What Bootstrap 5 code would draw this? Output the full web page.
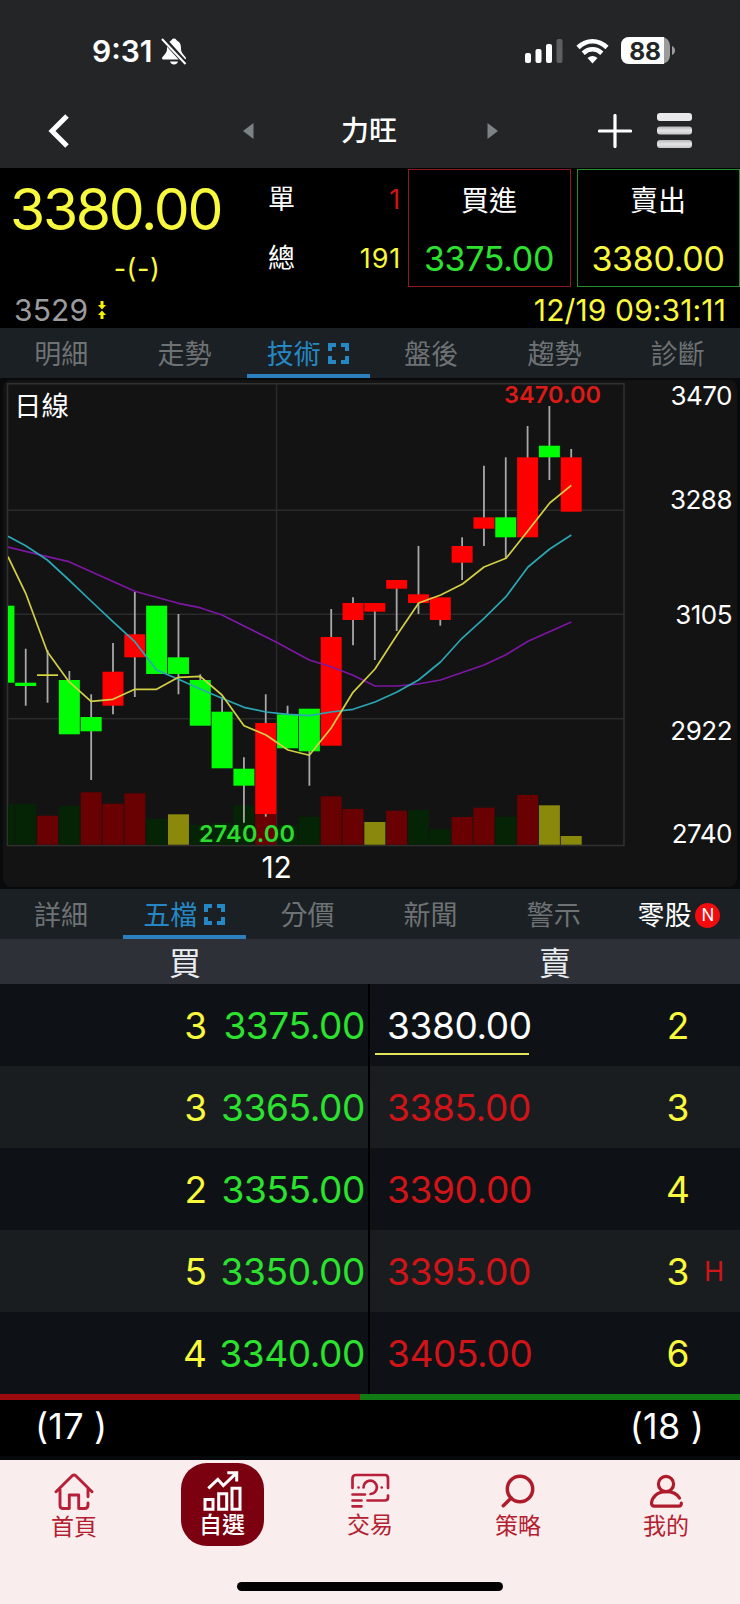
<!DOCTYPE html>
<html lang="zh-Hant">
<head>
<meta charset="utf-8">
<meta name="viewport" content="width=device-width, initial-scale=1">
<title>力旺 3529</title>
<link href="https://cdn.jsdelivr.net/npm/bootstrap@5.3.0/dist/css/bootstrap.min.css" rel="stylesheet">
<style>
  :root { --y: #f8f93c; --g: #2be32f; --r: #d01418; }
  body { background: #05090b; color: #fff; font-family: Inter, "Noto Sans CJK TC", sans-serif; line-height: 1; width: 740px; margin: 0; overflow-x: hidden; }
  svg { display: block; flex: none; }
  .num { letter-spacing: -.01em; white-space: nowrap; }
  .yel { color: var(--y); } .grn { color: var(--g); } .rd { color: var(--r); }
  .topbar { background: #232526; height: 168px; }
  .status { height: 98px; padding: 3px 64px 0 92px; }
  .clock { font-size: 30px; font-weight: 600; letter-spacing: 0; }
  .titlebar { height: 66px; padding: 0 47px 0 47px; }
  .titlebar h1 { font-size: 28px; font-weight: 500; padding: 2px 3px 0 0; }
  .quote { background: #000; height: 160px; padding-top: 1px; }
  .quote-main { height: 118px; }
  .last { width: 252px; }
  .last-price { font-size: 57px; height: 80px; padding-left: 10px; letter-spacing: -.04em; }
  .change { font-size: 27px; height: 38px; padding-left: 22px; letter-spacing: .02em; }
  .vol { width: 148px; padding-left: 16px; font-size: 27px; margin-right: 8px; }
  .vol .num { letter-spacing: .03em; margin-right: -1px; }
  .line1 { height: 61px; } .line2 { height: 56px; }
  .deal { width: 163px; height: 118px; border: 1.5px solid #8c1a20; font-size: 28px; padding-right: 1px; }
  .deal + .deal { border-color: #21902a; margin-left: 6px; width: 163px; }
  .deal .num { font-size: 34px; }
  .quote-foot { height: 41px; padding: 4px 14px 0 14px; font-size: 30px; }
  .quote-foot .num { letter-spacing: .004em; }
  .tabs { background: #1a2023; height: 50px; font-size: 27px; color: #6f7274; }
  .tabs > div { flex: 1 1 0; border-bottom: 4px solid transparent; padding-top: 13px; padding-right: 1px; }
  .tabs > .on { color: #2687c5; border-color: #2b80bd; }
  .tabs > .lit { color: #fff; padding-right: 0; padding-left: 2px; }
  .new { background: #f30b0d; color: #fff; width: 25px; height: 25px; font-size: 17px; margin: 1px 0 0 4px; }
  .chart { height: 511px; background: #080a0b; }
  .sides { background: #2d3037; height: 45px; font-size: 32px; color: #e9edf0; padding-top: 5px; }
  .lvl { height: 82px; background: #0e1216; font-size: 37px; }
  .lvl:nth-child(even) { background: #191d20; }
  .lvl > div { width: 50%; padding-top: 1px; }
  .bid { border-right: 2px solid #000; padding-right: 3px; }
  .bid .num { width: 147px; }
  .ask { padding-left: 5px; }
  .ask .num { width: 154px; height: 58px; padding-left: 12px; border: solid transparent; border-width: 2px 0; }
  .ask .best { color: #fff; border-bottom-color: #e6e55a; }
  .qty { margin-right: 11px; }
  .ask .qty { width: 30px; text-align: center; margin: 0 11px 0 0; }
  .flag { width: 36px; font-size: 27px; font-weight: 400; }
  .pressure { height: 6px; }
  .sums { background: #000; height: 56px; font-size: 36px; padding: 0 36px 4px 35px; }
  .sums .num { letter-spacing: .005em; }
  .dock { background: #faeded; height: 144px; margin-top: 4px; color: #b3202f; position: relative; }
  .dock a { width: 148px; color: #b3202f; font-size: 23px; text-decoration: none; padding-top: 12px; }
  .dock a.on { color: #fff; padding-top: 3px; font-weight: 500; }
  .pill { width: 83px; height: 83px; border-radius: 26px; background: #7b0010; padding-top: 8px; }
  .homebar { width: 266px; height: 9px; background: #000; bottom: 13px; left: 237px; }
</style>
</head>
<body>

<header class="topbar">
  <div class="status d-flex align-items-center">
    <span class="clock">9:31</span>
    <svg class="ms-2" width="26" height="28" viewBox="0 0 26 28"><path d="M13 1.500C10.700 1.500 11 3 9.500 4C6 6 6 9 6 12C6 17 1 19 1 21.500Q1 22.500 2.500 22.500H23.500Q25 22.500 25 21.500C25 19 20 17 20 12C20 9 20 6 16.500 4C15 3 15.300 1.500 13 1.500Z" fill="#fff"/><path d="M9 24.500H17Q16 27.500 13 27.500Q10 27.500 9 24.500Z" fill="#fff"/><path d="M2.500 2L25 27" stroke="#232526" stroke-width="5"/><path d="M1 2L24.500 27" stroke="#fff" stroke-width="2"/></svg>
    <div class="d-flex align-items-center ms-auto">
      <svg width="38" height="26" viewBox="0 0 38 26"><g fill="#fff"><rect y="15" width="6" height="10" rx="2"/><rect x="10.500" y="11" width="6" height="14" rx="2"/><rect x="21" y="6" width="6" height="19" rx="2"/><rect x="31.500" y="1" width="6" height="24" rx="2" opacity=".27"/></g></svg>
      <svg style="margin-left:13px" width="33" height="26" viewBox="0 0 33 26"><g fill="none" stroke="#fff" stroke-width="4.600"><path d="M2 9.500Q8.500 3.300 16.500 3.300T31 9.500"/><path d="M7.200 15.200Q11.500 11.300 16.500 11.300T25.800 15.200"/></g><path d="M11.500 20Q16.500 15.800 21.500 20L16.500 25.500Z" fill="#fff"/></svg>
      <svg style="margin-left:12px" width="55" height="28" viewBox="0 0 55 28"><rect width="49" height="27" rx="8.500" fill="#9b9c9c"/><path d="M8.500 0H43V27H8.500Q0 27 0 18.500V8.500Q0 0 8.500 0Z" fill="#fff"/><path d="M51 9Q54 10.500 54 13.500T51 18Z" fill="#9b9c9c"/><text x="24" y="22.500" text-anchor="middle" font-size="24.500" font-weight="700" letter-spacing="-.3" fill="#232526">88</text></svg>
    </div>
  </div>
  <nav class="titlebar d-flex align-items-center">
    <svg width="24" height="36" viewBox="0 0 24 36"><path d="M20 3L5 18L20 33" fill="none" stroke="#fff" stroke-width="5"/></svg>
    <svg style="margin-left:171px" width="12" height="18" viewBox="0 0 12 18"><path d="M11.500 1V17L1 9Z" fill="#7d8285"/></svg>
    <h1 class="m-0 text-center flex-grow-1">力旺</h1>
    <svg width="12" height="18" viewBox="0 0 12 18"><path d="M.5 1V17L11 9Z" fill="#7d8285"/></svg>
    <svg style="margin-left:99px" width="34" height="34" viewBox="0 0 34 34"><path d="M17 1.500V32.500M1.500 17H32.500" stroke="#fff" stroke-width="3.200" stroke-linecap="round"/></svg>
    <svg style="margin-left:25px" width="36" height="36" viewBox="0 0 36 36"><defs><linearGradient id="bar" x2="0" y2="1"><stop stop-color="#b5b5b8"/><stop offset=".5" stop-color="#e4e4e6"/><stop offset="1" stop-color="#c6c6c9"/></linearGradient></defs><g fill="url(#bar)"><rect y="0" width="35" height="8" rx="3" fill="#e9e9eb"/><rect y="13.500" width="35" height="8" rx="3"/><rect y="27" width="35" height="8" rx="3"/></g></svg>
  </nav>
</header>

<section class="quote">
  <div class="quote-main d-flex">
    <div class="last">
      <div class="last-price yel d-flex align-items-center">3380.00</div>
      <div class="change yel d-flex align-items-center justify-content-center">-(-)</div>
    </div>
    <div class="vol">
      <div class="line1 d-flex align-items-center justify-content-between">單<span class="num rd">1</span></div>
      <div class="line2 d-flex align-items-center justify-content-between">總<span class="num yel">191</span></div>
    </div>
    <div class="deal text-center">
      <div class="line1 d-flex align-items-center justify-content-center">買進</div>
      <div class="line2 num grn d-flex align-items-center justify-content-center">3375.00</div>
    </div>
    <div class="deal text-center">
      <div class="line1 d-flex align-items-center justify-content-center">賣出</div>
      <div class="line2 num yel d-flex align-items-center justify-content-center">3380.00</div>
    </div>
  </div>
  <div class="quote-foot d-flex align-items-center">
    <span class="num" style="color:#9c9c9e">3529</span>
    <svg style="margin-left:10px" width="8" height="18" viewBox="0 0 8 18"><path d="M2.500 0H5.500V4H8L4 8.500L0 4H2.500ZM2.500 18H5.500V14H8L4 9.500L0 14H2.500Z" fill="#f6f300"/></svg>
    <span class="num yel ms-auto">12/19 09:31:11</span>
  </div>
</section>

<nav class="tabs d-flex text-center">
  <div>明細</div><div>走勢</div>
  <div class="on d-flex justify-content-center">技術<svg style="margin:2px 0 0 7px" width="21" height="21" viewBox="0 0 21 21"><path d="M2 8V2H8M13 2H19V8M19 13V19H13M8 19H2V13" fill="none" stroke="currentColor" stroke-width="4"/></svg></div>
  <div>盤後</div><div>趨勢</div><div>診斷</div>
</nav>

<section class="chart">
  <svg id="kline" width="740" height="511" viewBox="0 0 740 511">
    <defs><clipPath id="plot"><rect x="8" y="5" width="616" height="462"/></clipPath></defs>
    <rect x="3" y="2" width="734" height="507" rx="8" fill="#131313"/>
    <g stroke="#2b2b2b" stroke-width="1.500" fill="none">
      <rect x="7.500" y="5.700" width="616.500" height="461.800" stroke="#303030" stroke-width="1.600"/>
      <path d="M276.500 6V467M8 132.300H624M8 236.300H624M8 340.700H624"/>
    </g>
    <g id="bars" clip-path="url(#plot)"></g>
    <g id="averages" fill="none" stroke-width="1.700" stroke-linejoin="round" clip-path="url(#plot)"></g>
    <g fill="#fff" font-size="26" text-anchor="end" letter-spacing="-.5">
      <text x="732" y="27">3470</text><text x="732" y="131">3288</text><text x="732" y="246">3105</text><text x="732" y="361.500">2922</text><text x="732" y="465">2740</text>
    </g>
    <text x="14" y="38" fill="#fff" font-size="27.500">日線</text>
    <text x="276.500" y="499.500" fill="#fff" font-size="30" text-anchor="middle" letter-spacing="-.2">12</text>
    <text x="552.500" y="25" fill="#dc1a18" font-size="23.500" font-weight="600" text-anchor="middle" textLength="97">3470.00</text>
    <text x="247" y="464" fill="#2bdc2f" font-size="23.500" font-weight="600" text-anchor="middle" textLength="96">2740.00</text>
  </svg>
</section>

<nav class="tabs d-flex text-center">
  <div>詳細</div>
  <div class="on d-flex justify-content-center">五檔<svg style="margin:2px 0 0 7px" width="21" height="21" viewBox="0 0 21 21"><path d="M2 8V2H8M13 2H19V8M19 13V19H13M8 19H2V13" fill="none" stroke="currentColor" stroke-width="4"/></svg></div>
  <div>分價</div><div>新聞</div><div>警示</div>
  <div class="lit d-flex justify-content-center">零股<span class="new rounded-circle d-inline-flex align-items-center justify-content-center">N</span></div>
</nav>

<div class="sides row g-0 text-center align-items-center"><div class="col-6">買</div><div class="col-6">賣</div></div>

<main id="levels"></main>

<div class="d-flex"><div class="pressure" style="width:360px;background:#9d0a0d"></div><div class="pressure flex-grow-1" style="background:#117a12"></div></div>
<div class="sums d-flex justify-content-between align-items-center"><span class="num">(17 )</span><span class="num">(18 )</span></div>

<footer class="dock">
  <div class="d-flex">
    <a href="#" class="d-flex flex-column align-items-center">
      <svg width="40" height="40" viewBox="0 0 40 40" fill="none" stroke="#b8203a" stroke-width="2.900" stroke-linecap="round" stroke-linejoin="round"><path d="M2 19.700L18.500 3.500Q20 2.300 21.500 3.500L38 19.700M34 16V24.700M34 31V33Q34 36.500 30.500 36.500H24.700V23H15.300V36.500H9Q6 36.500 6 33.500V17"/></svg>
      <span class="mt-1">首頁</span></a>
    <a href="#" class="on d-flex flex-column align-items-center"><div class="pill d-flex flex-column align-items-center">
      <svg width="40" height="41" viewBox="0 0 40 41" fill="none" stroke="#fff" stroke-width="3"><path d="M6.300 17.300L15.800 8.300L21.300 14.500L33.500 2.800M25.300 1.700H34.700V10.500M3 28.500H11V38.300H3ZM16.700 22.800H24.700V38.300H16.700ZM30 17.200H38V38.300H30Z"/></svg>
      <span style="margin-top:2px">自選</span></div></a>
    <a href="#" class="d-flex flex-column align-items-center">
      <svg width="40" height="38" viewBox="0 0 40 38" fill="none" stroke="#b8203a" stroke-width="2.700" stroke-linecap="round"><path d="M2.500 16V6.500Q2.500 3 6 3H35Q38 3 38 6.500V16M38 23.500V25.500Q38 28.500 35 28.500H17.500M2.500 22.500H15M2.500 28.500H11.500M2.500 34.300H11.500"/><path d="M13.500 15.500A6.700 6.700 0 1 1 20.500 22M8.500 15.500H8.600M31.700 15.500H31.800"/></svg>
      <span style="margin-top:4px">交易</span></a>
    <a href="#" class="d-flex flex-column align-items-center">
      <svg width="40" height="40" viewBox="0 0 40 40" fill="none" stroke="#ae1c2b" stroke-width="3.500" stroke-linecap="round"><circle cx="22" cy="17" r="12.700"/><path d="M13.300 26L5.300 33.700"/></svg>
      <span style="margin-top:3px">策略</span></a>
    <a href="#" class="d-flex flex-column align-items-center">
      <svg width="40" height="40" viewBox="0 0 40 40" fill="none" stroke="#ae1c2b" stroke-width="3.200" stroke-linecap="round" stroke-linejoin="round"><circle cx="20" cy="12" r="7.600"/><path d="M33.500 26C31 21.500 26 19.600 20 19.600C11 19.600 6 25.500 5.500 31Q5.500 34.200 8.500 34.200H32.500Q35.500 34.200 35.300 31"/></svg>
      <span style="margin-top:3px">我的</span></a>
  </div>
  <div class="homebar position-absolute rounded-pill"></div>
</footer>

<script src="https://cdn.jsdelivr.net/npm/bootstrap@5.3.0/dist/js/bootstrap.bundle.min.js"></script>
<script>
  // Order book: bid quantity, bid, ask, ask quantity, flag
  const book = [[3, '3375.00', '3380.00', 2, ''], [3, '3365.00', '3385.00', 3, ''], [2, '3355.00', '3390.00', 4, ''], [5, '3350.00', '3395.00', 3, 'H'], [4, '3340.00', '3405.00', 6, '']];
  document.getElementById('levels').innerHTML = book.map((b, i) =>
    `<div class="lvl d-flex"><div class="bid d-flex align-items-center justify-content-end"><span class="qty yel">${b[0]}</span><span class="num grn text-end">${b[1]}</span></div>
     <div class="ask d-flex align-items-center"><span class="num rd d-flex align-items-center ${i ? '' : 'best'}">${b[2]}</span><span class="qty yel ms-auto">${b[3]}</span><span class="flag rd">${b[4]}</span></div></div>`).join('');

  // Candles: colour, high, low, body top, body bottom, volume colour, volume top
  const step = 21.82, first = 3.9, base = 466.7;
  const candles = [
    ['g',228,304,227.7,304.7,'g',426],['g',270.7,327.7,304.7,308,'g',426],['y',272,324.7,296.3,298,'r',437.7],
    ['g',293,356,302,356.3,'g',428],['g',316.3,402,339,353.3,'r',414.3],['r',265,336.3,293.7,327.7,'r',425.7],
    ['r',213.7,319,256.3,279.3,'r',415.3],['g',228,296,227.7,296,'g',441],['g',236,316.3,279.3,296,'y',436.3],
    ['g',296.3,347,302,347.7,'g',447],['g',318.7,390,333.7,390.3,'g',445],['g',379.3,444.7,390.7,407.7,'g',427],
    ['r',316.3,438.7,345,436,'r',425],['g',327.7,370,336.3,370.3,'g',447],['g',331,407.7,330.7,373.3,'g',438.7],
    ['r',231,367,259,367.7,'r',418.3],['r',219.3,267.3,225,242,'r',431],['r',225,282,225,233.7,'y',444],
    ['r',202,253,202,210.7,'r',432.7],['r',168,236,216.3,225,'g',432],['r',220,247.7,219.3,242,'g',451.3],
    ['r',159.3,202,168,184.7,'r',439],['r',87.7,168,139.3,150.7,'r',429.7],['g',79.3,181,139.3,159.3,'g',438.7],
    ['r',48,159,79.3,159.3,'r',417],['g',28,102,67.7,79.3,'y',427.3],['r',71,133,79.3,133.7,'y',458]];
  const body = {g: '#00ff04', r: '#ff0000', y: '#d9d83c'}, volume = {g: '#052305', r: '#690002', y: '#8b890b'};
  document.getElementById('bars').innerHTML = candles.map(([c, hi, lo, t, b, v, vt], i) => {
    const x = first + i * step;
    return `<rect x="${x - 10.5}" y="${vt}" width="21" height="${base - vt}" fill="${volume[v]}"/>
      <path d="M${x} ${hi}V${lo}" stroke="#a8a8a8" stroke-width="1.800"/>
      <rect x="${x - 10.5}" y="${t}" width="21" height="${b - t}" fill="${body[c]}"/>`;
  }).join('');
  const averages = {
    '#7d16a3': '8,169 47.3,178.7 69,183.7 134.8,213.3 178.4,225.3 200,229.7 222,237 276.5,264.3 309.3,282 331,288.7 353,297.3 375,308 397,308 418,306 440.5,302 484,287 506,276.7 528,263.3 571.3,244',
    '#2ba6b5': '8,158.3 25.7,167.7 47.3,182 69,202 91,223 112.9,243.7 134.8,263.7 156.6,292 178.4,301.3 200.2,311 222,320.3 244,329.3 266,334 288,336.3 309.3,337.7 331,334 353,331.3 375,324 397,314 418.5,302 440.5,284 462,260.3 484,240.3 506,218.7 528,189 549.7,171 571.3,157',
    '#d2cf45': '8,178.7 25.7,215.3 47.3,273.7 69,303.7 91,323.3 112.9,321.3 134.8,311.3 156.6,311.3 178.4,299.3 200.2,298.3 222,317 244,347.7 266,357 288,372 309.3,377.3 331,350.3 353,314.3 375,291 397,257 418.7,225 440.7,217 462.5,206 484,189 506,180.3 528,152.7 549.7,125 571.3,107.3'
  };
  document.getElementById('averages').innerHTML = Object.entries(averages).map(([c, p]) => `<polyline points="${p}" stroke="${c}"/>`).join('');
</script>
</body>
</html>
